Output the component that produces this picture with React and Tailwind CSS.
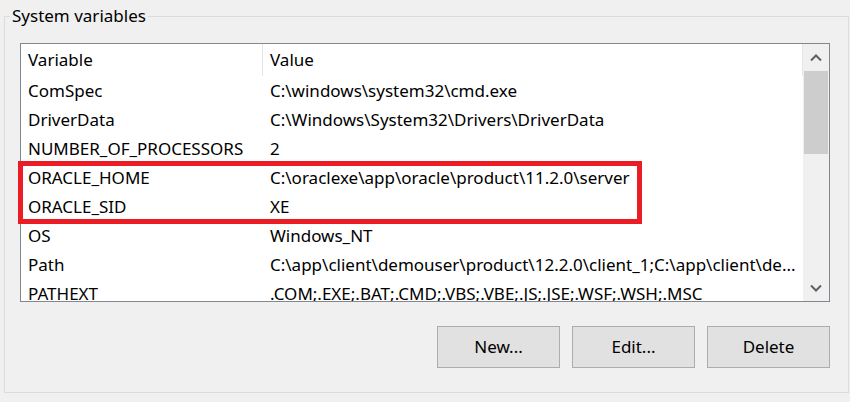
import React from "react";

const rows = [
  ["ComSpec", "C:\\windows\\system32\\cmd.exe"],
  ["DriverData", "C:\\Windows\\System32\\Drivers\\DriverData"],
  ["NUMBER_OF_PROCESSORS", "2"],
  ["ORACLE_HOME", "C:\\oraclexe\\app\\oracle\\product\\11.2.0\\server"],
  ["ORACLE_SID", "XE"],
  ["OS", "Windows_NT"],
  ["Path", "C:\\app\\client\\demouser\\product\\12.2.0\\client_1;C:\\app\\client\\de..."],
  ["PATHEXT", ".COM;.EXE;.BAT;.CMD;.VBS;.VBE;.JS;.JSE;.WSF;.WSH;.MSC"],
];

function Chevron({ down }) {
  return (
    <svg width="12" height="8" viewBox="0 0 12 8">
      <path
        d={down ? "M1 1.5 L6 6.5 L11 1.5" : "M1 6.5 L6 1.5 L11 6.5"}
        fill="none"
        stroke="#606060"
        strokeWidth="2"
      />
    </svg>
  );
}

export default function App() {
  return (
    <div
      className="relative w-[850px] h-[402px] bg-[#f0f0f0] text-black overflow-hidden"
      style={{ fontFamily: '"Noto Sans", "Open Sans", sans-serif' }}
    >
      <fieldset className="mt-[4px] ml-[4px] w-[845px] h-[389px] border border-[#dcdcdc]">
        <legend className="ml-[5px] px-[2px] text-[17px] leading-[24px]">System variables</legend>

        <div className="ml-[15px] mt-[15px] w-[810px]">
          {/* list view */}
          <div className="flex h-[259px] border border-[#828790] bg-white">
            <div className="flex-1 overflow-hidden text-[17px]">
              <div className="flex h-[32px] items-center">
                <div className="w-[241px] pl-[7px]">Variable</div>
                <div className="w-px h-full bg-[#e5e5e5]" />
                <div className="flex-1 pl-[7px]">Value</div>
                <div className="w-px h-full bg-[#e5e5e5]" />
              </div>
              {rows.map(([k, v]) => (
                <div key={k} className="flex h-[29px] items-center">
                  <div className="w-[242px] pl-[7px] whitespace-nowrap">{k}</div>
                  <div className="flex-1 min-w-0 pl-[7px] pr-[6px] truncate">{v}</div>
                </div>
              ))}
            </div>
            {/* scrollbar */}
            <div className="w-[26px] bg-[#f0f0f0] flex flex-col">
              <div className="h-[27px] flex items-center justify-center">
                <Chevron />
              </div>
              <div className="h-[83px] mx-[1px] bg-[#cdcdcd]" />
              <div className="flex-1" />
              <div className="h-[27px] flex items-center justify-center">
                <Chevron down />
              </div>
            </div>
          </div>

          {/* buttons */}
          <div className="mt-[24px] flex justify-end gap-[12px] text-[17px]">
            {["New...", "Edit...", "Delete"].map((b) => (
              <button
                key={b}
                className="w-[123px] h-[42px] bg-[#e1e1e1] border border-[#adadad] flex items-center justify-center"
              >
                {b}
              </button>
            ))}
          </div>
        </div>
      </fieldset>

      {/* highlight box */}
      <div className="absolute left-[18px] top-[161px] w-[624px] h-[63px] border-[5px] border-[#ec1c24] pointer-events-none" />
    </div>
  );
}
